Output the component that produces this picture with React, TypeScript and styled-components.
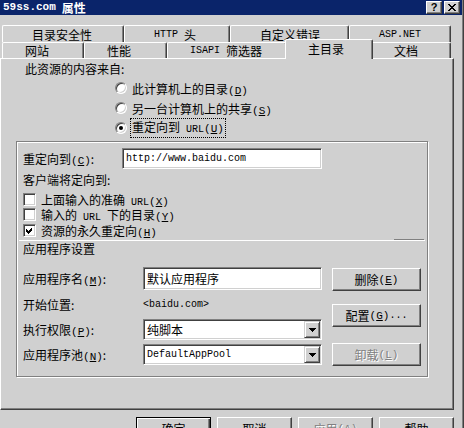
import React from "react";
import styled, { createGlobalStyle, css } from "styled-components";

const FACE = "#d0d0d0";

const GlobalStyle = createGlobalStyle`
  html, body { margin: 0; padding: 0; background: ${FACE}; }
  body {
    font-family: "Noto Sans CJK SC", "Liberation Sans", sans-serif;
    font-size: 12px;
    color: #000;
  }
  * { box-sizing: border-box; }
`;

const Window = styled.div`
  width: 464px;
  height: 428px;
  overflow: hidden;
  display: flex;
  flex-direction: column;
  background: ${FACE};
  box-shadow: inset -1px 0 #404040, inset -2px 0 #808080;
`;

const TitleBar = styled.div`
  flex-shrink: 0;
  height: 15px;
  margin-right: 2px;
  padding: 0 2px 0 3px;
  background: #0a246a;
  color: #fff;
  display: flex;
  justify-content: space-between;
  align-items: flex-start;
`;

const TitleText = styled.div`
  font-weight: bold;
  line-height: 15px;
  white-space: nowrap;
  display: flex;
  align-items: center;
  gap: 6px;
`;

const TitleLatin = styled.span`
  font-family: "Liberation Mono", monospace;
  font-size: 11px;
  font-weight: bold;
`;

const CaptionButtons = styled.div`
  display: flex;
  gap: 2px;
  margin-top: 1px;
`;

const CaptionButton = styled.div`
  width: 16px;
  height: 13px;
  background: ${FACE};
  border: 1px solid;
  border-color: #fff #404040 #404040 #fff;
  box-shadow: inset -1px -1px #808080;
  display: flex;
  align-items: center;
  justify-content: center;
  color: #000;
  font: bold 11px "Liberation Sans", sans-serif;
  line-height: 1;
`;

const TabArea = styled.div`
  flex-shrink: 0;
  margin-top: 10px;
  padding-left: 2px;
`;

const TabRow = styled.div<{ $h: number }>`
  display: flex;
  height: ${(p) => p.$h}px;
`;

const Tab = styled.div<{ $w: number; $pad: number; $active?: boolean }>`
  position: relative;
  flex-shrink: 0;
  width: ${(p) => p.$w}px;
  height: 100%;
  padding-left: ${(p) => p.$pad}px;
  background: ${FACE};
  border-top: 1px solid #fff;
  border-left: 1px solid #fff;
  border-right: 1px solid #404040;
  box-shadow: inset -1px 0 #808080;
  border-radius: 2px 2px 0 0;
  white-space: pre;
  display: flex;
  align-items: center;
  ${(p) =>
    p.$active &&
    css`
      z-index: 1;
      width: ${p.$w + 4}px;
      height: calc(100% + 4px);
      margin: -3px -2px -1px;
      padding-bottom: 3px;
    `}
`;

const Lat = styled.span`
  font-family: "Liberation Mono", monospace;
  font-size: 10px;
  white-space: pre;
`;

const KeyText = styled.span`
  font-family: "Liberation Mono", monospace;
  font-size: 11px;
`;

const Panel = styled.div`
  flex-shrink: 0;
  width: 454px;
  height: 352px;
  border-top: 1px solid #fff;
  border-left: 1px solid #fff;
  border-right: 1px solid #404040;
  border-bottom: 1px solid #404040;
  box-shadow: inset -1px -1px #808080;
`;

const SourceLabel = styled.div`
  height: 19px;
  line-height: 19px;
  padding-left: 24px;
  white-space: nowrap;
`;

const RadioList = styled.div`
  display: flex;
  flex-direction: column;
  padding-left: 114px;
`;

const RadioRow = styled.div`
  height: 20px;
  display: flex;
  align-items: center;
  gap: 5px;
  white-space: nowrap;
`;

const RadioDot = styled.span<{ $checked?: boolean }>`
  position: relative;
  flex-shrink: 0;
  width: 12px;
  height: 12px;
  border-radius: 50%;
  background: #fff;
  border: 1px solid;
  border-color: #808080 #fff #fff #808080;
  box-shadow: inset 1px 1px #404040, inset -1px -1px ${FACE};
  ${(p) =>
    p.$checked &&
    css`
      &::after {
        content: "";
        position: absolute;
        left: 3px;
        top: 3px;
        width: 4px;
        height: 4px;
        border-radius: 50%;
        background: #000;
      }
    `}
`;

const FocusLabel = styled.span`
  outline: 1px dotted #000;
  padding: 0 1px;
  line-height: 15px;
  margin-left: -1px;
`;

const GroupBox = styled.div`
  margin: 3px 0 0 15px;
  width: 412px;
  height: 236px;
  border: 1px solid #808080;
  box-shadow: inset 1px 1px #fff, 1px 1px #fff;
  padding-left: 6px;
  display: flex;
  flex-direction: column;
`;

const FieldRow = styled.div<{ $h: number; $mt?: number }>`
  display: flex;
  align-items: center;
  height: ${(p) => p.$h}px;
  margin-top: ${(p) => p.$mt ?? 0}px;
  flex-shrink: 0;
  white-space: nowrap;
`;

const FieldLabel = styled.div<{ $w: number }>`
  width: ${(p) => p.$w}px;
  flex-shrink: 0;
  white-space: nowrap;
`;

const TextLine = styled.div<{ $h: number; $mt?: number }>`
  height: ${(p) => p.$h}px;
  line-height: ${(p) => p.$h}px;
  margin-top: ${(p) => p.$mt ?? 0}px;
  flex-shrink: 0;
  white-space: nowrap;
`;

const Edit = styled.div<{ $w: number; $h: number }>`
  width: ${(p) => p.$w}px;
  height: ${(p) => p.$h}px;
  flex-shrink: 0;
  background: #fff;
  border: 1px solid;
  border-color: #808080 #fff #fff #808080;
  box-shadow: inset 1px 1px #404040, inset -1px -1px ${FACE};
  padding: 0 1px 0 2px;
  display: flex;
  align-items: center;
  white-space: nowrap;
`;

const EditText = styled.span<{ $mono?: boolean }>`
  padding-left: 1px;
  ${(p) =>
    p.$mono &&
    css`
      font-family: "Liberation Mono", monospace;
      font-size: 10px;
    `}
`;

const DropArrow = styled.div`
  margin-left: auto;
  width: 16px;
  height: 17px;
  background: ${FACE};
  border: 1px solid;
  border-color: ${FACE} #404040 #404040 ${FACE};
  box-shadow: inset 1px 1px #fff, inset -1px -1px #808080;
  display: flex;
  align-items: center;
  justify-content: center;
`;

const CheckRow = styled.div<{ $h: number; $mt?: number }>`
  display: flex;
  align-items: center;
  gap: 5px;
  height: ${(p) => p.$h}px;
  margin-top: ${(p) => p.$mt ?? 0}px;
  flex-shrink: 0;
  white-space: nowrap;
`;

const CheckBox = styled.span`
  flex-shrink: 0;
  width: 13px;
  height: 13px;
  background: #fff;
  border: 1px solid;
  border-color: #808080 #fff #fff #808080;
  box-shadow: inset 1px 1px #404040, inset -1px -1px ${FACE};
  display: flex;
  align-items: center;
  justify-content: center;
`;

const Separator = styled.div`
  flex-shrink: 0;
  margin: 1px 0 0 -4px;
  width: 406px;
  height: 2px;
  border-bottom: 1px solid #fff;
  background: linear-gradient(#808080, #808080) no-repeat right 1px top / 30px 1px;
`;

const AppArea = styled.div`
  display: flex;
  margin-top: 10px;
`;

const LeftCol = styled.div`
  display: flex;
  flex-direction: column;
  width: 299px;
`;

const ButtonCol = styled.div`
  display: flex;
  flex-direction: column;
  margin-left: 10px;
`;

const PushButton = styled.div<{
  $w: number;
  $mt?: number;
  $disabled?: boolean;
  $default?: boolean;
}>`
  flex-shrink: 0;
  width: ${(p) => p.$w}px;
  height: 23px;
  margin-top: ${(p) => p.$mt ?? 0}px;
  background: ${FACE};
  border: 1px solid;
  border-color: #fff #404040 #404040 #fff;
  box-shadow: inset -1px -1px #808080;
  display: flex;
  align-items: center;
  justify-content: center;
  white-space: nowrap;
  ${(p) =>
    p.$default &&
    css`
      border-color: #000;
      box-shadow: inset 1px 1px #fff, inset -1px -1px #404040, inset -2px -2px #808080;
    `}
  ${(p) =>
    p.$disabled &&
    css`
      color: #808080;
      text-shadow: 1px 1px #fff;
    `}
`;

const ButtonBar = styled.div`
  flex-shrink: 0;
  display: flex;
  gap: 6px;
  margin-top: 7px;
  padding-left: 136px;
`;

const Key = ({ k }: { k: string }) => (
  <KeyText>
    (<u>{k}</u>)
  </KeyText>
);

const CloseGlyph = () => (
  <svg width="8" height="7" viewBox="0 0 8 7" shapeRendering="crispEdges">
    <path
      fill="#000"
      d="M0 0h2v1h-2z M6 0h2v1h-2z M1 1h2v1h-2z M5 1h2v1h-2z M2 2h4v1h-4z M3 3h2v1h-2z M2 4h4v1h-4z M1 5h2v1h-2z M5 5h2v1h-2z M0 6h2v1h-2z M6 6h2v1h-2z"
    />
  </svg>
);

const ArrowGlyph = () => (
  <svg width="7" height="4" viewBox="0 0 7 4" shapeRendering="crispEdges">
    <path fill="#000" d="M0 0h7v1h-1v1h-1v1h-1v1h-1v-1h-1v-1h-1v-1h-1z" />
  </svg>
);

const CheckGlyph = () => (
  <svg width="7" height="7" viewBox="0 0 7 7" shapeRendering="crispEdges">
    <polygon fill="#000" points="0,2 2,4 6,0 6,3 2,7 0,5" />
  </svg>
);

const backTabs: { label: React.ReactNode; w: number }[] = [
  { label: "目录安全性", w: 122 },
  { label: <><Lat>{"HTTP "}</Lat>头</>, w: 106 },
  { label: "自定义错误", w: 119 },
  { label: <Lat>ASP.NET</Lat>, w: 102 },
];

const frontTabs: { label: React.ReactNode; w: number; active?: boolean }[] = [
  { label: "网站", w: 82 },
  { label: "性能", w: 83 },
  { label: <><Lat>{"ISAPI "}</Lat>筛选器</>, w: 120 },
  { label: "主目录", w: 84, active: true },
  { label: "文档", w: 80 },
];

const App = () => {
  return (
    <>
      <GlobalStyle />
      <Window>
        <TitleBar>
          <TitleText>
            <TitleLatin>59ss.com</TitleLatin>
            <span>属性</span>
          </TitleText>
          <CaptionButtons>
            <CaptionButton>?</CaptionButton>
            <CaptionButton>
              <CloseGlyph />
            </CaptionButton>
          </CaptionButtons>
        </TitleBar>

        <TabArea>
          <TabRow $h={17}>
            {backTabs.map((t, i) => (
              <Tab key={i} $w={t.w} $pad={29}>
                {t.label}
              </Tab>
            ))}
          </TabRow>
          <TabRow $h={16}>
            {frontTabs.map((t, i) => (
              <Tab key={i} $w={t.w} $pad={22} $active={t.active}>
                {t.label}
              </Tab>
            ))}
          </TabRow>
        </TabArea>

        <Panel>
          <SourceLabel>此资源的内容来自:</SourceLabel>
          <RadioList>
            <RadioRow>
              <RadioDot />
              <span>
                此计算机上的目录<Key k="D" />
              </span>
            </RadioRow>
            <RadioRow>
              <RadioDot />
              <span>
                另一台计算机上的共享<Key k="S" />
              </span>
            </RadioRow>
            <RadioRow>
              <RadioDot $checked />
              <FocusLabel>
                重定向到<Lat>{" URL"}</Lat>
                <Key k="U" />
              </FocusLabel>
            </RadioRow>
          </RadioList>

          <GroupBox>
            <FieldRow $h={21} $mt={6}>
              <FieldLabel $w={99}>
                重定向到<Key k="C" />:
              </FieldLabel>
              <Edit $w={200} $h={21}>
                <EditText $mono>http://www.baidu.com</EditText>
              </Edit>
            </FieldRow>
            <TextLine $h={20} $mt={1}>客户端将定向到:</TextLine>
            <CheckRow $h={16} $mt={1}>
              <CheckBox />
              <span>
                上面输入的准确<Lat>{" URL"}</Lat>
                <Key k="X" />
              </span>
            </CheckRow>
            <CheckRow $h={15}>
              <CheckBox />
              <span>
                输入的<Lat>{" URL "}</Lat>下的目录<Key k="Y" />
              </span>
            </CheckRow>
            <CheckRow $h={16}>
              <CheckBox>
                <CheckGlyph />
              </CheckBox>
              <span>
                资源的永久重定向<Key k="H" />
              </span>
            </CheckRow>
            <Separator />
            <TextLine $h={16}>应用程序设置</TextLine>

            <AppArea>
              <LeftCol>
                <FieldRow $h={23}>
                  <FieldLabel $w={120}>
                    应用程序名<Key k="M" />:
                  </FieldLabel>
                  <Edit $w={179} $h={23}>
                    <EditText>默认应用程序</EditText>
                  </Edit>
                </FieldRow>
                <FieldRow $h={29}>
                  <FieldLabel $w={120}>开始位置:</FieldLabel>
                  <Lat>&lt;baidu.com&gt;</Lat>
                </FieldRow>
                <FieldRow $h={21}>
                  <FieldLabel $w={120}>
                    执行权限<Key k="P" />:
                  </FieldLabel>
                  <Edit $w={179} $h={21}>
                    <EditText>纯脚本</EditText>
                    <DropArrow>
                      <ArrowGlyph />
                    </DropArrow>
                  </Edit>
                </FieldRow>
                <FieldRow $h={21} $mt={4}>
                  <FieldLabel $w={120}>
                    应用程序池<Key k="N" />:
                  </FieldLabel>
                  <Edit $w={179} $h={21}>
                    <EditText $mono>DefaultAppPool</EditText>
                    <DropArrow>
                      <ArrowGlyph />
                    </DropArrow>
                  </Edit>
                </FieldRow>
              </LeftCol>
              <ButtonCol>
                <PushButton $w={89} $mt={1}>
                  删除<Key k="E" />
                </PushButton>
                <PushButton $w={89} $mt={13}>
                  配置<Key k="G" />
                  <Lat>...</Lat>
                </PushButton>
                <PushButton $w={89} $mt={16} $disabled>
                  卸载<Key k="L" />
                </PushButton>
              </ButtonCol>
            </AppArea>
          </GroupBox>
        </Panel>

        <ButtonBar>
          <PushButton $w={75} $default>
            确定
          </PushButton>
          <PushButton $w={75}>取消</PushButton>
          <PushButton $w={75} $disabled>
            应用<Key k="A" />
          </PushButton>
          <PushButton $w={75}>帮助</PushButton>
        </ButtonBar>
      </Window>
    </>
  );
};

export default App;
